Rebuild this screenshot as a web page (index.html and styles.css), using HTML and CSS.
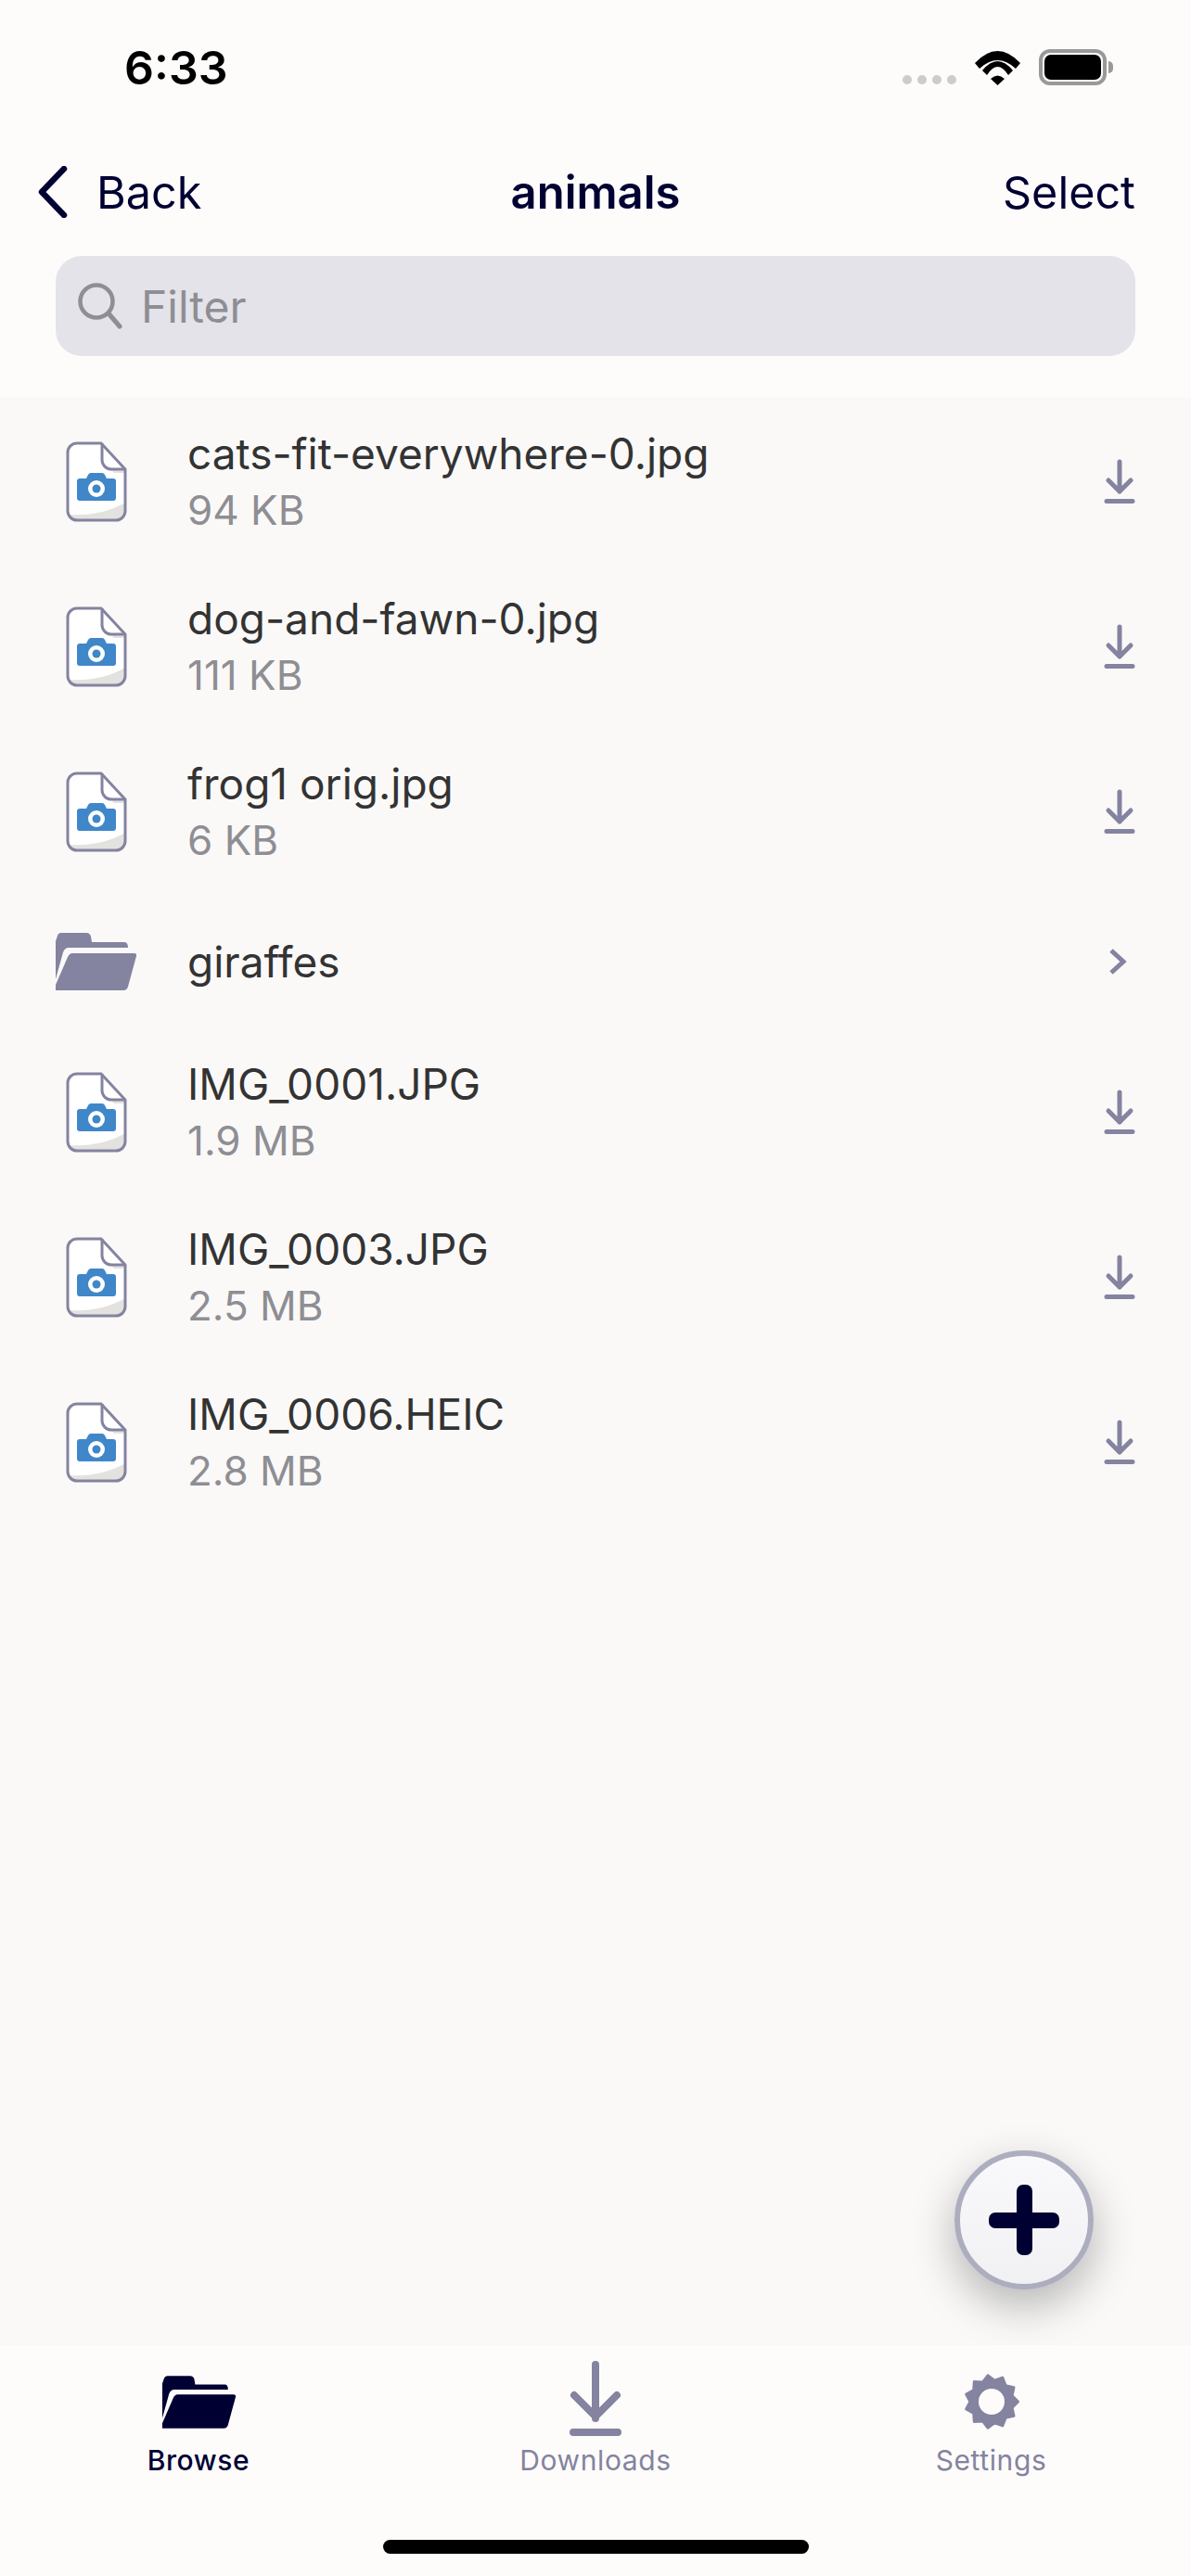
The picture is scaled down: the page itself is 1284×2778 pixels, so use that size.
FILE: index.html
```html
<!DOCTYPE html>
<html lang="en">
<head>
    <meta charset="UTF-8">
    <meta name="viewport" content="width=device-width, initial-scale=1.0">
    <title>animals</title>
    <link rel="stylesheet" href="styles.css">
</head>
<body>
    <!-- Icon sprite -->
    <svg class="sprite" aria-hidden="true">
        <symbol id="icon-file" viewBox="0 0 66 87">
            <path d="M12 2H38L64 30V75A10 10 0 0 1 54 85H12A10 10 0 0 1 2 75V12A10 10 0 0 1 12 2Z" fill="#fff"/>
            <path d="M3 79Q38 81 64 66V75A10 10 0 0 1 54 85H12A10 10 0 0 1 3 79Z" fill="#e4e2df"/>
            <path d="M48 30H64V34H52Z" fill="#e4e2df"/>
            <path d="M12 2H38L64 30V75A10 10 0 0 1 54 85H12A10 10 0 0 1 2 75V12A10 10 0 0 1 12 2Z" fill="none" stroke="#8483a0" stroke-width="3"/>
            <path d="M39 2V20A10 10 0 0 0 49 30H64" fill="none" stroke="#8483a0" stroke-width="3"/>
            <path d="M15 40H22L24 36Q25 34 27 34H39Q41 34 42 36L44 40H51Q54 40 54 43V61Q54 64 51 64H15Q12 64 12 61V43Q12 40 15 40Z" fill="#3f87c9"/>
            <circle cx="33" cy="51" r="9" fill="#fff"/>
            <circle cx="33" cy="51" r="4.5" fill="#3f87c9"/>
        </symbol>
        <symbol id="icon-folder" viewBox="0 0 87 62">
            <path d="M0 9L2 3Q3 0 6 0H33Q37 0 38 4L39 10H74Q78 10 78 16H14Q10 16 8 21L0 50Z" fill="currentColor"/>
            <path d="M18 22H84Q88 22 87 25L78 58Q77 62 73 62H0V56L13 26Q15 22 18 22Z" fill="currentColor"/>
        </symbol>
        <symbol id="icon-download" viewBox="0 0 34 48">
            <path d="M17 3V35M5 23L17 35L29 23M3 45.5H31" fill="none" stroke="currentColor" stroke-width="5" stroke-linecap="round" stroke-linejoin="round"/>
        </symbol>
    </svg>

    <!-- Status bar -->
    <div class="status-bar">
        <span class="time">6:33</span>
        <div class="status-icons">
            <div class="signal"><span></span><span></span><span></span><span></span></div>
            <svg class="wifi" viewBox="0 0 49 37">
                <path d="M0 13Q24.5 -13 49 13L44 19Q24.5 1 5 19Z"/>
                <path d="M8 21Q24.5 1 41 21L36 26Q24.5 8 13 26Z"/>
                <path d="M17 30Q24.5 23 32 30L24.5 37Z"/>
            </svg>
            <div class="battery"><div class="battery-level"></div></div>
        </div>
    </div>

    <!-- Navigation -->
    <header class="nav">
        <a class="nav-back">
            <svg class="back-icon" viewBox="0 0 32 56"><path d="M28 3L4 28L28 53" fill="none" stroke="currentColor" stroke-width="6.5" stroke-linecap="round" stroke-linejoin="round"/></svg>
            Back
        </a>
        <h1 class="nav-title">animals</h1>
        <a class="nav-select">Select</a>
    </header>

    <div class="search-wrap">
        <div class="search">
            <svg class="search-icon" viewBox="0 0 48 50"><circle cx="20" cy="20" r="17.5" fill="none" stroke="currentColor" stroke-width="4.5"/><path d="M33 33L45 47" fill="none" stroke="currentColor" stroke-width="5" stroke-linecap="round"/></svg>
            <span>Filter</span>
        </div>
    </div>

    <!-- File list -->
    <main class="list">
        <div class="row">
            <span class="thumb"><svg class="file-icon"><use href="#icon-file"/></svg></span>
            <div class="info"><div class="name">cats-fit-everywhere-0.jpg</div><div class="size">94 KB</div></div>
            <svg class="row-action"><use href="#icon-download"/></svg>
        </div>
        <div class="row">
            <span class="thumb"><svg class="file-icon"><use href="#icon-file"/></svg></span>
            <div class="info"><div class="name">dog-and-fawn-0.jpg</div><div class="size">111 KB</div></div>
            <svg class="row-action"><use href="#icon-download"/></svg>
        </div>
        <div class="row">
            <span class="thumb"><svg class="file-icon"><use href="#icon-file"/></svg></span>
            <div class="info"><div class="name">frog1 orig.jpg</div><div class="size">6 KB</div></div>
            <svg class="row-action"><use href="#icon-download"/></svg>
        </div>
        <div class="row row-folder">
            <span class="thumb"><svg class="folder-icon"><use href="#icon-folder"/></svg></span>
            <div class="info"><div class="name">giraffes</div></div>
            <svg class="row-chevron" viewBox="0 0 34 30"><path d="M8 3L21 15L8 27" fill="none" stroke="currentColor" stroke-width="5"/></svg>
        </div>
        <div class="row">
            <span class="thumb"><svg class="file-icon"><use href="#icon-file"/></svg></span>
            <div class="info"><div class="name">IMG_0001.JPG</div><div class="size">1.9 MB</div></div>
            <svg class="row-action"><use href="#icon-download"/></svg>
        </div>
        <div class="row">
            <span class="thumb"><svg class="file-icon"><use href="#icon-file"/></svg></span>
            <div class="info"><div class="name">IMG_0003.JPG</div><div class="size">2.5 MB</div></div>
            <svg class="row-action"><use href="#icon-download"/></svg>
        </div>
        <div class="row">
            <span class="thumb"><svg class="file-icon"><use href="#icon-file"/></svg></span>
            <div class="info"><div class="name">IMG_0006.HEIC</div><div class="size">2.8 MB</div></div>
            <svg class="row-action"><use href="#icon-download"/></svg>
        </div>
    </main>

    <!-- Floating add button -->
    <button class="fab"><span class="fab-plus"></span></button>

    <!-- Tab bar -->
    <footer class="tabbar">
        <nav class="tabs">
            <a class="tab active">
                <span class="tab-icon"><svg class="tab-folder"><use href="#icon-folder"/></svg></span>
                Browse
            </a>
            <a class="tab">
                <span class="tab-icon"><svg class="tab-download" viewBox="0 0 56 82"><path d="M28 4V62M5 37L28 60L51 37M4 77H52" fill="none" stroke="currentColor" stroke-width="8" stroke-linecap="round" stroke-linejoin="round"/></svg></span>
                Downloads
            </a>
            <a class="tab">
                <span class="tab-icon"><svg class="tab-gear" viewBox="0 0 62 62"><path fill-rule="evenodd" d="M59.5 31L53.1 24.5L55 15.6L46.1 13.6L42.8 5.1L34.3 8.2L26.9 2.8L21.4 10.1L12.3 9.5L11.7 18.6L3.7 23L8 31L3.7 39L11.7 43.4L12.3 52.5L21.4 51.9L26.9 59.2L34.3 53.8L42.8 56.9L46.1 48.4L55 46.4L53.1 37.5ZM46.5 31A15.5 15.5 0 1 0 15.5 31A15.5 15.5 0 1 0 46.5 31Z" fill="currentColor" stroke="currentColor" stroke-width="3" stroke-linejoin="round"/></svg></span>
                Settings
            </a>
        </nav>
        <div class="home-indicator"></div>
    </footer>
</body>
</html>
```

FILE: styles.css
```css
* {
    margin: 0;
    padding: 0;
    box-sizing: border-box;
}

body {
    font-family: 'Inter', 'Liberation Sans', sans-serif;
    background-color: #faf9f8;
    color: #333;
    width: 1284px;
    height: 2778px;
    display: flex;
    flex-direction: column;
    position: relative;
    overflow: hidden;
}

.sprite {
    display: none;
}

/* Status bar */
.status-bar {
    height: 146px;
    background-color: #fdfcfb;
    padding: 45px 91px 0 134px;
    display: flex;
    justify-content: space-between;
    align-items: flex-start;
}

.time {
    font-size: 50px;
    line-height: 56px;
    font-weight: 600;
    color: #000;
}

.status-icons {
    display: flex;
    align-items: flex-end;
    margin-top: 8px;
}

.signal {
    display: flex;
    gap: 6px;
    margin-right: 20px;
    margin-bottom: 1px;
}

.signal span {
    width: 10px;
    height: 10px;
    border-radius: 50%;
    background-color: #ccc;
}

.wifi {
    width: 49px;
    height: 37px;
    margin-right: 20px;
}

.battery {
    position: relative;
    width: 73px;
    height: 39px;
    border: 4px solid #999;
    border-radius: 12px;
    padding: 2px;
}

.battery::after {
    content: '';
    position: absolute;
    right: -11px;
    top: 9px;
    width: 5px;
    height: 13px;
    background-color: #999;
    border-radius: 0 6px 6px 0;
}

.battery-level {
    height: 100%;
    background-color: #000;
    border-radius: 7px;
}

/* Navigation */
.nav {
    height: 122px;
    background-color: #fdfcfb;
    color: #000033;
    padding: 0 60px;
    display: grid;
    grid-template-columns: 1fr auto 1fr;
    align-items: center;
    font-size: 48.5px;
}

.nav-back {
    display: flex;
    align-items: center;
    gap: 31px;
    margin-left: -19px;
}

.back-icon {
    width: 32px;
    height: 56px;
}

.nav-title {
    font-size: 49px;
    font-weight: 600;
}

.nav-select {
    justify-self: end;
}

.search-wrap {
    background-color: #fdfcfb;
    padding: 8px 60px 44px;
}

.search {
    height: 108px;
    background-color: #e3e3e9;
    border-radius: 28px;
    padding-left: 24px;
    display: flex;
    align-items: center;
    gap: 20px;
    color: #8e8e93;
    font-size: 48px;
}

.search-icon {
    width: 48px;
    height: 50px;
}

/* File list */
.list {
    flex: 1;
    padding-top: 2px;
}

.row {
    height: 178px;
    padding: 0 60px;
    display: flex;
    align-items: center;
}

.row-folder {
    height: 146px;
}

.thumb {
    width: 87px;
    margin-right: 55px;
    display: flex;
    justify-content: center;
}

.file-icon {
    width: 66px;
    height: 87px;
}

.folder-icon {
    width: 87px;
    height: 62px;
    color: #8483a0;
}

.info {
    flex: 1;
}

.name {
    font-size: 46px;
    line-height: 60px;
    color: #333;
}

.size {
    font-size: 44px;
    line-height: 60px;
    padding-top: 1px;
    color: #8e8e93;
}

.row-action {
    width: 34px;
    height: 48px;
    color: #8483a0;
}

.row-chevron {
    width: 34px;
    height: 30px;
    color: #8483a0;
}

/* Add button */
.fab {
    position: absolute;
    left: 1029px;
    top: 2319px;
    width: 150px;
    height: 150px;
    border: 6px solid #adadc0;
    border-radius: 50%;
    background: linear-gradient(180deg, #f9f9fb, #f1f1f3);
    box-shadow: 0 18px 48px rgba(0, 0, 0, 0.28);
    display: flex;
    align-items: center;
    justify-content: center;
}

.fab-plus {
    position: relative;
    width: 76px;
    height: 17px;
    border-radius: 7px;
    background-color: #000033;
}

.fab-plus::after {
    content: '';
    position: absolute;
    left: 29.5px;
    top: -29.5px;
    width: 17px;
    height: 76px;
    border-radius: 7px;
    background-color: #000033;
}

/* Tab bar */
.tabbar {
    position: relative;
    height: 249px;
    background-color: #fdfcfb;
}

.tabs {
    display: grid;
    grid-template-columns: repeat(3, 1fr);
}

.tab {
    display: flex;
    flex-direction: column;
    align-items: center;
    color: #8483a0;
    font-size: 30px;
    line-height: 36px;
    letter-spacing: 0.6px;
    padding-top: 16px;
}

.tab:last-child {
    padding-right: 3px;
}

.tab.active {
    color: #000033;
    font-weight: 500;
}

.tab-icon {
    height: 90px;
    display: flex;
    align-items: center;
    justify-content: center;
}

.tab-folder {
    width: 79px;
    height: 57px;
}

.tab-download {
    width: 56px;
    height: 82px;
    margin-top: -6px;
}

.tab-gear {
    width: 62px;
    height: 62px;
}

.home-indicator {
    position: absolute;
    left: 413px;
    top: 210px;
    width: 459px;
    height: 15px;
    border-radius: 8px;
    background-color: #000;
}
```
